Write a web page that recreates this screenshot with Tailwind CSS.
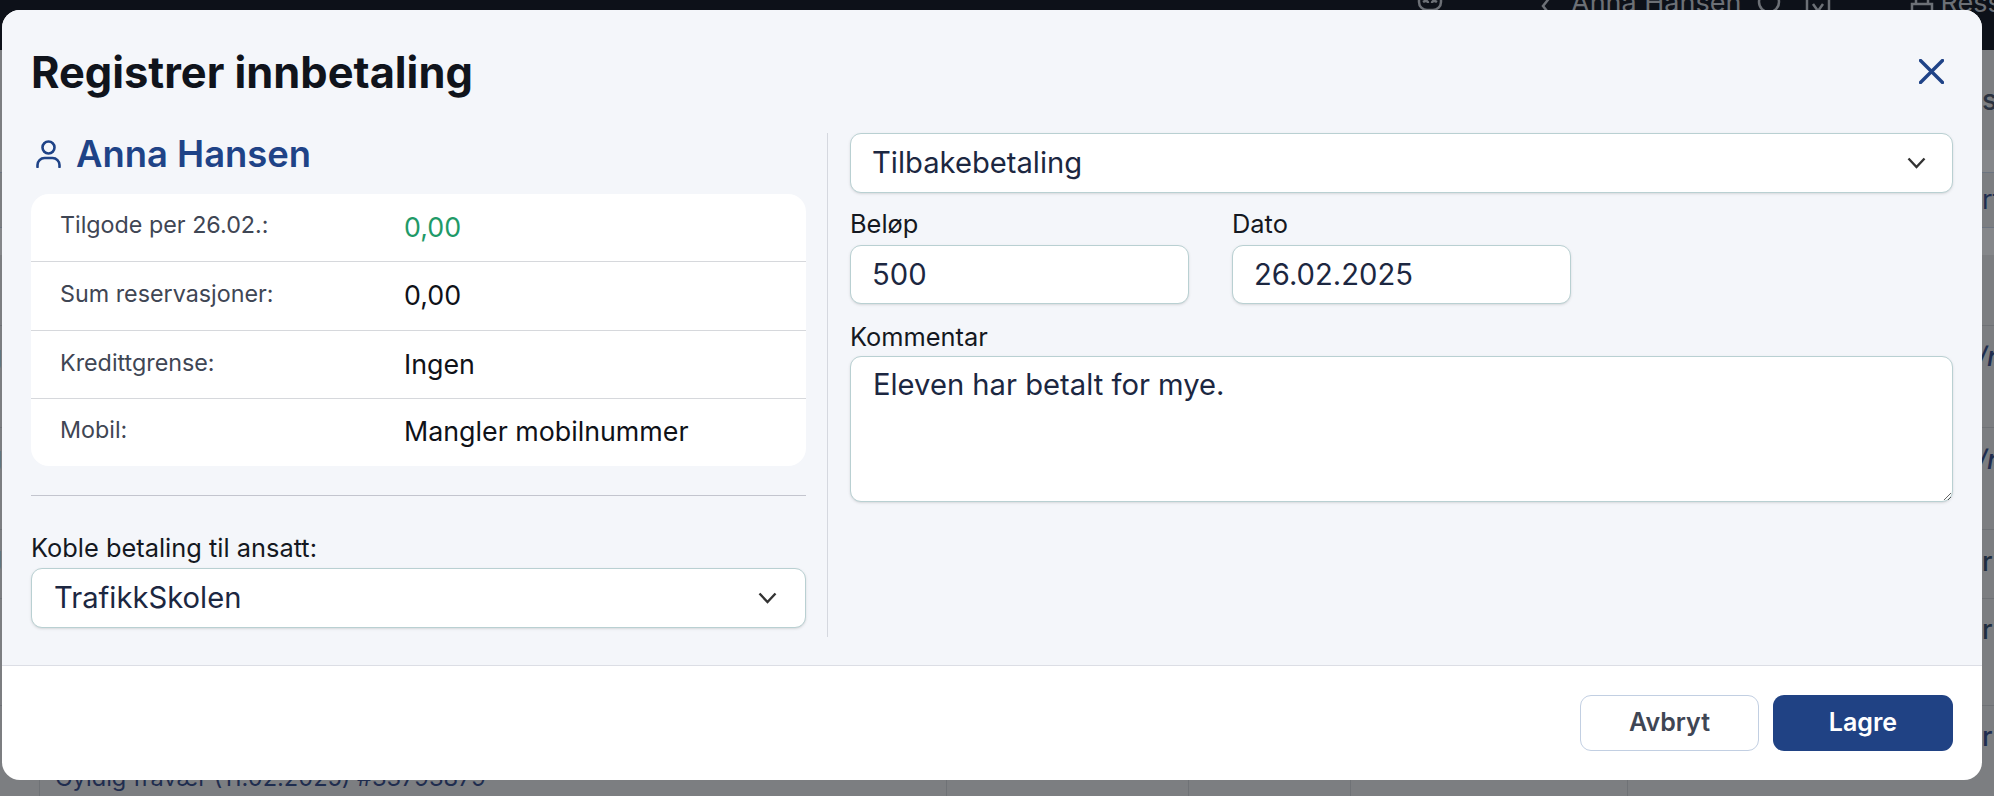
<!DOCTYPE html>
<html lang="no">
<head>
    <meta charset="UTF-8">
    <title>Registrer innbetaling</title>
    <script src="https://cdn.jsdelivr.net/npm/@tailwindcss/browser@4"></script>
</head>
<body class="bg-[#7c7e81] font-['Inter',sans-serif]">
    <div class="relative w-[1994px] h-[796px] overflow-hidden">

        <!-- Page behind the overlay -->
        <div class="h-[50px] bg-[#0d1119] overflow-hidden flex items-start text-[#6c7076] text-[27px] leading-[34px]">
            <div class="flex items-start ml-[1417px] -mt-[14px]">
                <svg class="-mt-[8px] w-[26px] h-[34px]" viewBox="0 0 26 34" fill="none" stroke="currentColor" stroke-width="2.5"><path d="M2 4h22v20a8 8 0 0 1-8 8h-6a8 8 0 0 1-8-8z"/><path d="M6 24c3-2 5-1 5 1M20 24c-3-2-5-1-5 1"/></svg>
                <svg class="ml-[97px] w-[14px] h-[34px] -mt-[4px]" viewBox="0 0 14 34" fill="none" stroke="currentColor" stroke-width="2.5"><path d="M11 14 3 24l8 10"/></svg>
                <span class="ml-[17px] whitespace-nowrap">Anna Hansen</span>
                <svg class="ml-[16px] w-[24px] h-[34px] -mt-[6px]" viewBox="0 0 24 34" fill="none" stroke="currentColor" stroke-width="2.5"><circle cx="12" cy="22" r="10"/></svg>
                <svg class="ml-[24px] w-[26px] h-[34px] -mt-[4px]" viewBox="0 0 26 34" fill="none" stroke="currentColor" stroke-width="2.5"><path d="M2 10h22v24H2z"/><path d="m8 22 5 7 5-7"/></svg>
                <svg class="ml-[78px] w-[26px] h-[34px] -mt-[2px]" viewBox="0 0 26 34" fill="none" stroke="currentColor" stroke-width="2.5"><path d="M3 20h20v14H3zM7 20V10h12v10"/></svg>
                <span class="ml-[5px] whitespace-nowrap">Ressurser</span>
            </div>
        </div>

        <div class="h-[100px] flex justify-between text-[#2a3240]">
            <span></span>
            <span class="w-[12px] overflow-hidden text-[28px] leading-[34px] pt-[33px] font-medium">s</span>
        </div>
        <div class="h-[23px] bg-[#85878a] border-b border-[#6c7480]"></div>
        <div class="h-[55px] flex justify-end border-b border-[#6c7480] text-[#1f2d4f]">
            <span class="w-[12px] overflow-hidden text-[27px] leading-[34px] pt-[10px]">rt</span>
        </div>
        <div class="h-[27px] bg-[#85878a]"></div>
        <div class="h-[71px] border-b border-[#6f7276]"></div>
        <div class="h-[102px] flex justify-between items-start border-b border-[#6f7276] text-[#1f2d4f] text-[27px] leading-[34px]">
            <span class="w-[2px] overflow-hidden flex justify-end pt-[13px]">g</span>
            <span class="w-[12px] overflow-hidden italic font-medium whitespace-nowrap pt-[14px] indent-[-5px]">/r.</span>
        </div>
        <div class="h-[102px] flex justify-between items-start border-b border-[#6f7276] text-[#1f2d4f] text-[27px] leading-[34px]">
            <span class="w-[2px] overflow-hidden flex justify-end pt-[12px]">g</span>
            <span class="w-[12px] overflow-hidden italic font-medium whitespace-nowrap pt-[15px] indent-[-5px]">/r.</span>
        </div>
        <div class="h-[69px] flex justify-between items-start border-b border-[#6f7276] text-[#1f2d3f] text-[27px] leading-[34px]">
            <span class="w-[2px] overflow-hidden flex justify-end pt-[10px]">g</span>
            <span class="w-[12px] overflow-hidden font-medium whitespace-nowrap pt-[15px]">ri</span>
        </div>
        <div class="h-[107px] flex justify-end border-b border-[#6f7276] text-[#1f2d3f] text-[27px] leading-[34px]">
            <span class="w-[12px] overflow-hidden font-medium whitespace-nowrap pt-[14px]">ri</span>
        </div>
        <div class="h-[90px] flex text-[#1f2d4f] text-[23.6px] leading-[34px]">
            <div class="w-[39px] flex justify-end"><span class="w-[2px] overflow-hidden flex justify-end pt-[10px] text-[27px]">g</span></div>
            <div class="w-[907px] border-l border-[#6f7276] pl-[15px] pt-[55px] whitespace-nowrap">Gyldig fravær (11.02.2025) #33793879</div>
            <div class="w-[242px] border-l border-[#6f7276]"></div>
            <div class="w-[162px] border-l border-[#6f7276]"></div>
            <div class="w-[277px] border-l border-[#6f7276]"></div>
            <div class="flex-1 border-l border-[#6f7276] flex justify-end"><span class="w-[12px] overflow-hidden font-medium whitespace-nowrap pt-[14px] text-[27px]">ri</span></div>
        </div>

        <!-- Modal -->
        <div class="absolute left-[2px] top-[10px] w-[1980px] h-[770px] rounded-[18px] overflow-hidden bg-white flex flex-col">
            <div class="h-[656px] bg-[#f4f6fa] border-b border-[#dcdee5] pl-[29px] pr-[29px]">
                <div class="h-[123px] flex justify-between">
                    <h1 class="text-[43.4px] leading-[48px] font-bold text-[#10141c] pt-[38px] box-content">Registrer innbetaling</h1>
                    <svg class="mt-[49px] mr-[9px] w-[25px] h-[25px]" viewBox="0 0 25 25" fill="none" stroke="#1f4387" stroke-width="3.4" stroke-linecap="round"><path d="m1.5 1.5 22 22M23.5 1.5l-22 22"/></svg>
                </div>
                <div class="flex h-[504px]">
                    <!-- Left column -->
                    <div class="w-[797px] pr-[21px] border-r border-[#d5d8df]">
                        <div class="h-[42px] flex items-center mb-[19px]">
                            <svg class="ml-[5px] w-[25px] h-[28px]" viewBox="0 0 25 28" fill="none" stroke="#1f4387" stroke-width="2.6" stroke-linecap="round"><circle cx="12.5" cy="7.5" r="6"/><path d="M1.5 27v-2a7 7 0 0 1 7-7h8a7 7 0 0 1 7 7v2"/></svg>
                            <span class="ml-[15px] text-[36.4px] leading-[42px] font-semibold text-[#1f4387]">Anna Hansen</span>
                        </div>
                        <div class="bg-white rounded-[18px] text-[23.3px] text-[#3f4654]">
                            <div class="h-[68px] flex items-center border-b border-[#d6d8dc] pl-[29px]">
                                <span class="w-[344px] -mt-[4px]">Tilgode per 26.02.:</span>
                                <span class="text-[26.8px] -mt-[1px] text-[#1f9a68]">0,00</span>
                            </div>
                            <div class="h-[69px] flex items-center border-b border-[#d6d8dc] pl-[29px]">
                                <span class="w-[344px] -mt-[3px]">Sum reservasjoner:</span>
                                <span class="text-[26.8px] -mt-[1px] text-[#0f1218]">0,00</span>
                            </div>
                            <div class="h-[68px] flex items-center border-b border-[#d6d8dc] pl-[29px]">
                                <span class="w-[344px] -mt-[3px]">Kredittgrense:</span>
                                <span class="text-[26.8px] -mt-[1px] text-[#0f1218]">Ingen</span>
                            </div>
                            <div class="h-[67px] flex items-center pl-[29px]">
                                <span class="w-[344px] -mt-[5px]">Mobil:</span>
                                <span class="text-[26.8px] -mt-[2px] text-[#0f1218]">Mangler mobilnummer</span>
                            </div>
                        </div>
                        <div class="mt-[29px] border-t border-[#c3c5ce]"></div>
                        <label class="block mt-[35px] mb-[3px] text-[25.4px] leading-[34px] text-[#141821]">Koble betaling til ansatt:</label>
                        <div class="relative">
                            <select class="appearance-none w-full h-[60px] pl-[22px] bg-white border border-[#b9d0d2] rounded-[11px] shadow-sm text-[29.2px] text-[#1c2741] outline-none">
                                <option>TrafikkSkolen</option>
                            </select>
                            <svg class="absolute right-[29px] top-[24px] w-[19px] h-[12px] pointer-events-none" viewBox="0 0 19 12" fill="none" stroke="#333" stroke-width="2.4"><path d="m1.5 1.5 8 8.5 8-8.5"/></svg>
                        </div>
                    </div>
                    <!-- Right column -->
                    <div class="flex-1 pl-[22px]">
                        <div class="relative">
                            <select class="appearance-none w-full h-[60px] pl-[21px] bg-white border border-[#b9d0d2] rounded-[11px] shadow-sm text-[29.2px] text-[#1c2741] outline-none">
                                <option>Tilbakebetaling</option>
                            </select>
                            <svg class="absolute right-[27px] top-[24px] w-[19px] h-[12px] pointer-events-none" viewBox="0 0 19 12" fill="none" stroke="#333" stroke-width="2.4"><path d="m1.5 1.5 8 8.5 8-8.5"/></svg>
                        </div>
                        <div class="flex gap-[43px] mt-[14px]">
                            <div class="w-[339px]">
                                <label class="block mb-[4px] text-[25.4px] leading-[34px] text-[#141821]">Beløp</label>
                                <input type="text" value="500" class="w-full h-[59px] pl-[21px] bg-white border border-[#b9d0d2] rounded-[11px] shadow-sm text-[29.2px] text-[#1c2741] outline-none">
                            </div>
                            <div class="w-[339px]">
                                <label class="block mb-[4px] text-[25.4px] leading-[34px] text-[#141821]">Dato</label>
                                <input type="text" value="26.02.2025" class="w-full h-[59px] pl-[21px] bg-white border border-[#b9d0d2] rounded-[11px] shadow-sm text-[29.2px] text-[#1c2741] outline-none">
                            </div>
                        </div>
                        <label class="block mt-[16px] mb-[2px] text-[25.4px] leading-[34px] text-[#141821]">Kommentar</label>
                        <textarea class="block w-full h-[146px] px-[22px] py-[9px] bg-white border border-[#b9d0d2] rounded-[11px] shadow-sm text-[29.2px] leading-[38px] text-[#1c2741] outline-none">Eleven har betalt for mye.</textarea>
                    </div>
                </div>
            </div>
            <div class="flex-1 flex justify-end gap-[14px] pt-[29px] pr-[29px]">
                <button class="w-[179px] h-[56px] bg-white border border-[#c2cfe2] rounded-[11px] text-[25px] font-semibold text-[#3f4654]">Avbryt</button>
                <button class="w-[180px] h-[56px] bg-[#204284] rounded-[11px] text-[25px] font-semibold text-white">Lagre</button>
            </div>
        </div>
    </div>
</body>
</html>
